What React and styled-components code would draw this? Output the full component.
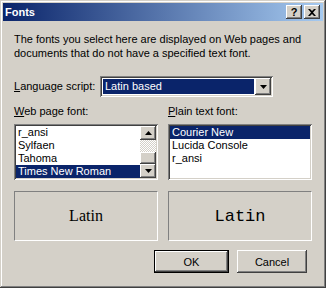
import React from "react";
import styled, { createGlobalStyle } from "styled-components";

const GlobalStyle = createGlobalStyle`
  html, body { margin: 0; padding: 0; background: #d4d0c8; }
  body { font-family: "Liberation Sans", Arial, sans-serif; font-size: 11px; color: #000; }
`;

const raised = `
  box-shadow: inset -1px -1px #404040, inset 1px 1px #fff,
    inset -2px -2px #808080, inset 2px 2px #d4d0c8;
`;

const sunken = `
  box-shadow: inset 1px 1px #808080, inset -1px -1px #fff,
    inset 2px 2px #404040, inset -2px -2px #d4d0c8;
`;

const Window = styled.div`
  width: 326px;
  height: 288px;
  box-sizing: border-box;
  padding: 3px;
  background: #d4d0c8;
  box-shadow: inset -1px -1px #404040, inset 1px 1px #d4d0c8,
    inset -2px -2px #808080, inset 2px 2px #fff;
  display: flex;
  flex-direction: column;
`;

const TitleBar = styled.div`
  height: 18px;
  display: flex;
  align-items: center;
  justify-content: space-between;
  padding: 0 3px 0 2px;
  background: linear-gradient(to right, #0a246a, #a6caf0);
`;

const Title = styled.span`
  color: #fff;
  font-weight: bold;
  font-size: 11px;
`;

const TitleButtons = styled.div`
  display: flex;
  gap: 2px;
`;

const TitleButton = styled.div`
  width: 16px;
  height: 14px;
  background: #d4d0c8;
  ${raised}
  display: flex;
  align-items: center;
  justify-content: center;
  font-weight: bold;
  font-size: 11px;
  line-height: 14px;
`;

const Body = styled.div`
  padding: 11px 10px 0 11px;
  display: flex;
  flex-direction: column;
`;

const Intro = styled.p`
  margin: 0;
  line-height: 14px;
`;

const LangRow = styled.div`
  margin-top: 16px;
  display: flex;
  align-items: center;
  height: 21px;
`;

const Label = styled.span`
  width: 86px;
  line-height: 13px;
`;

const Combo = styled.div`
  width: 173px;
  height: 21px;
  box-sizing: border-box;
  padding: 2px;
  background: #fff;
  ${sunken}
  display: flex;
`;

const ComboValue = styled.div`
  flex: 1;
  margin: 1px;
  background: #0a246a;
  color: #fff;
  line-height: 15px;
  padding-left: 2px;
`;

const ArrowButton = styled.div`
  width: ${(p) => p.$w || 16}px;
  height: ${(p) => p.$h || 17}px;
  box-sizing: border-box;
  background: #d4d0c8;
  ${raised}
  display: flex;
  align-items: center;
  justify-content: center;
`;

const Columns = styled.div`
  margin-top: 8px;
  display: grid;
  grid-template-columns: 144px 144px;
  column-gap: 10px;
`;

const Column = styled.div`
  display: flex;
  flex-direction: column;
`;

const ListBox = styled.div`
  margin-top: 6px;
  height: 56px;
  box-sizing: border-box;
  padding: 2px;
  background: #fff;
  ${sunken}
  display: flex;
`;

const Items = styled.div`
  flex: 1;
  display: flex;
  flex-direction: column;
`;

const Item = styled.div`
  height: 13px;
  line-height: 13px;
  padding-left: 2px;
  white-space: nowrap;
  background: ${(p) => (p.$selected ? "#0a246a" : "transparent")};
  color: ${(p) => (p.$selected ? "#fff" : "#000")};
`;

const ScrollBar = styled.div`
  width: 16px;
  display: flex;
  flex-direction: column;
`;

const Track = styled.div`
  height: ${(p) => p.$h}px;
  background: repeating-conic-gradient(#d4d0c8 0 25%, #fff 0 50%) 0 0 / 2px 2px;
`;

const Thumb = styled.div`
  height: 12px;
  box-sizing: border-box;
  background: #d4d0c8;
  ${raised}
`;

const Previews = styled.div`
  margin-top: 11px;
  display: grid;
  grid-template-columns: 144px 144px;
  column-gap: 10px;
`;

const Preview = styled.div`
  height: 50px;
  box-sizing: border-box;
  border: 1px solid;
  border-color: #808080 #fff #fff #808080;
  display: flex;
  align-items: center;
  justify-content: center;
  font-family: ${(p) =>
    p.$mono ? '"Liberation Mono", "Courier New", monospace' : '"Liberation Serif", "Times New Roman", serif'};
  font-size: ${(p) => (p.$mono ? 17 : 16)}px;
`;

const ButtonRow = styled.div`
  margin-top: 9px;
  margin-right: 6px;
  display: flex;
  justify-content: flex-end;
  gap: 8px;
`;

const Button = styled.div`
  width: ${(p) => p.$w}px;
  height: 23px;
  box-sizing: border-box;
  background: #d4d0c8;
  display: flex;
  align-items: center;
  justify-content: center;
  ${(p) =>
    p.$default
      ? `border: 1px solid #000;
         box-shadow: inset -1px -1px #404040, inset 1px 1px #fff,
           inset -2px -2px #808080, inset 2px 2px #d4d0c8;`
      : raised}
`;

const Down = () => (
  <svg width="7" height="4" viewBox="0 0 7 4">
    <polygon points="0,0 7,0 3.5,4" fill="#000" />
  </svg>
);

const Up = () => (
  <svg width="7" height="4" viewBox="0 0 7 4">
    <polygon points="0,4 7,4 3.5,0" fill="#000" />
  </svg>
);

const CloseGlyph = () => (
  <svg width="8" height="7" viewBox="0 0 8 7">
    <path d="M0 0h2l2 2 2-2h2L5 3.5 8 7H6L4 5 2 7H0l3-3.5z" fill="#000" />
  </svg>
);

export default function App() {
  return (
    <>
      <GlobalStyle />
      <Window>
        <TitleBar>
          <Title>Fonts</Title>
          <TitleButtons>
            <TitleButton>?</TitleButton>
            <TitleButton>
              <CloseGlyph />
            </TitleButton>
          </TitleButtons>
        </TitleBar>
        <Body>
          <Intro>
            The fonts you select here are displayed on Web pages and
            <br />
            documents that do not have a specified text font.
          </Intro>
          <LangRow>
            <Label>
              <u>L</u>anguage script:
            </Label>
            <Combo>
              <ComboValue>Latin based</ComboValue>
              <ArrowButton>
                <Down />
              </ArrowButton>
            </Combo>
          </LangRow>
          <Columns>
            <Column>
              <Label>
                <u>W</u>eb page font:
              </Label>
              <ListBox>
                <Items>
                  <Item>r_ansi</Item>
                  <Item>Sylfaen</Item>
                  <Item>Tahoma</Item>
                  <Item $selected>Times New Roman</Item>
                </Items>
                <ScrollBar>
                  <ArrowButton $h={14}>
                    <Up />
                  </ArrowButton>
                  <Track $h={12} />
                  <Thumb />
                  <ArrowButton $h={14}>
                    <Down />
                  </ArrowButton>
                </ScrollBar>
              </ListBox>
            </Column>
            <Column>
              <Label>
                <u>P</u>lain text font:
              </Label>
              <ListBox>
                <Items>
                  <Item $selected>Courier New</Item>
                  <Item>Lucida Console</Item>
                  <Item>r_ansi</Item>
                </Items>
              </ListBox>
            </Column>
          </Columns>
          <Previews>
            <Preview>Latin</Preview>
            <Preview $mono>Latin</Preview>
          </Previews>
          <ButtonRow>
            <Button $w={75} $default>OK</Button>
            <Button $w={70}>Cancel</Button>
          </ButtonRow>
        </Body>
      </Window>
    </>
  );
}
